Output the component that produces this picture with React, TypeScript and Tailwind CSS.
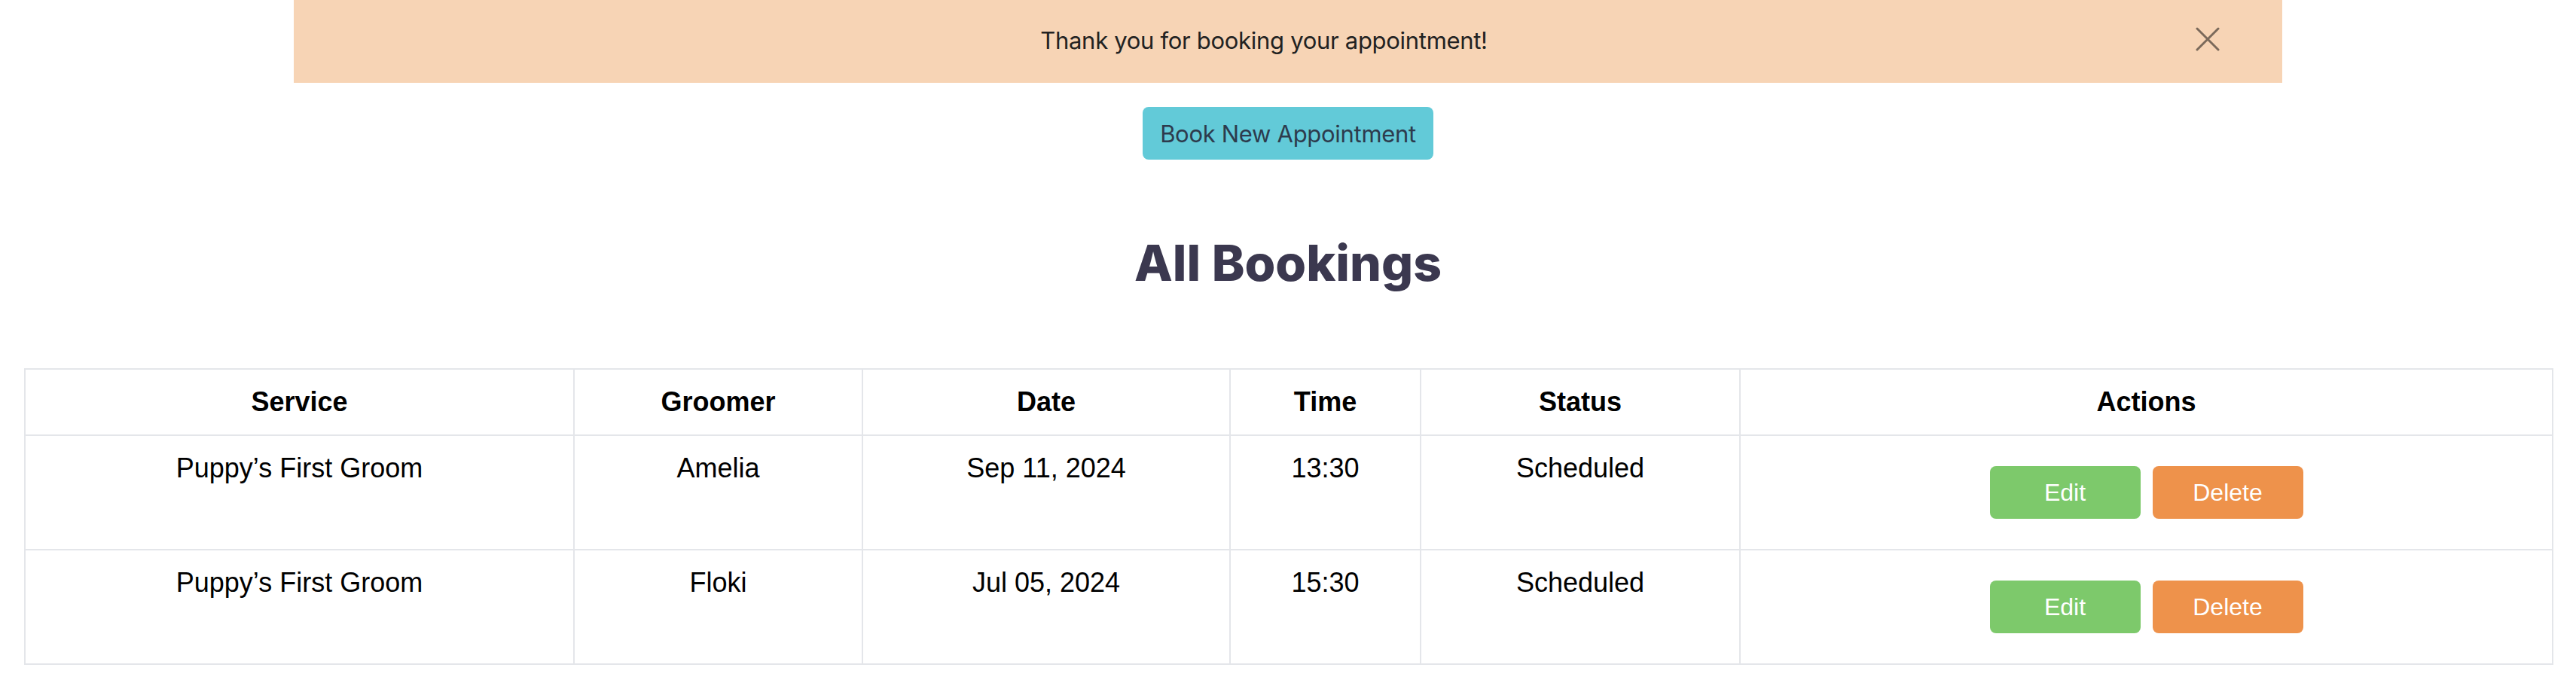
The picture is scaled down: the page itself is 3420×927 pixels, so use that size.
import { useState } from "react";

const bookings = [
  { service: "Puppy’s First Groom", groomer: "Amelia", date: "Sep 11, 2024", time: "13:30", status: "Scheduled" },
  { service: "Puppy’s First Groom", groomer: "Floki", date: "Jul 05, 2024", time: "15:30", status: "Scheduled" },
];

export default function App() {
  const [showBanner, setShowBanner] = useState(true);

  return (
    <div className="min-h-screen bg-white font-['Liberation_Sans',Arial,sans-serif]">
      {showBanner && (
        <div className="relative mx-auto flex h-[110px] w-[2640px] items-center bg-[#f7d4b5] pb-[2px] pr-[64px]">
          <p className="flex-1 text-center font-['Inter',sans-serif] text-[31px] tracking-[-0.3px] text-[#222222]">
            Thank you for booking your appointment!
          </p>
          <button
            className="absolute right-[83px] top-[36px] h-[32px] w-[32px]"
            onClick={() => setShowBanner(false)}
          >
            <svg viewBox="0 0 32 32" className="h-[32px] w-[32px]">
              <path d="M2 2 30 30M30 2 2 30" stroke="#7b6a5b" strokeWidth="3" strokeLinecap="round" fill="none" />
            </svg>
          </button>
        </div>
      )}

      <div className="mt-[32px] flex justify-center">
        <button className="h-[70px] rounded-[8px] bg-[#62cad8] px-[23px] pt-[2px] font-['Inter',sans-serif] text-[31px] tracking-[-0.3px] text-[#2d3b4d]">
          Book New Appointment
        </button>
      </div>

      <h1 className="mt-[104px] text-center font-['Inter',sans-serif] text-[66px] font-extrabold leading-none text-[#3b384f]">
        All Bookings
      </h1>

      <div className="mt-[107px] px-8">
        <table className="w-full table-fixed border-collapse border-2 border-[#e4e6ea] text-[36px] leading-[54px] text-black">
          <thead>
            <tr>
              <th className="w-[729px] border-2 border-[#e4e6ea] py-4 font-bold">Service</th>
              <th className="w-[383px] border-2 border-[#e4e6ea] py-4 font-bold">Groomer</th>
              <th className="w-[488px] border-2 border-[#e4e6ea] py-4 font-bold">Date</th>
              <th className="w-[253px] border-2 border-[#e4e6ea] py-4 font-bold">Time</th>
              <th className="w-[424px] border-2 border-[#e4e6ea] py-4 font-bold">Status</th>
              <th className="w-[1079px] border-2 border-[#e4e6ea] py-4 font-bold">Actions</th>
            </tr>
          </thead>
          <tbody>
            {bookings.map((b, i) => (
              <tr key={i}>
                <td className="border-2 border-[#e4e6ea] py-4 text-center align-top">{b.service}</td>
                <td className="border-2 border-[#e4e6ea] py-4 text-center align-top">{b.groomer}</td>
                <td className="border-2 border-[#e4e6ea] py-4 text-center align-top">{b.date}</td>
                <td className="border-2 border-[#e4e6ea] py-4 text-center align-top">{b.time}</td>
                <td className="border-2 border-[#e4e6ea] py-4 text-center align-top">{b.status}</td>
                <td className="border-2 border-[#e4e6ea] py-[40px]">
                  <div className="flex justify-center gap-4">
                    <button className="h-[70px] w-[200px] rounded-[8px] bg-[#7dc96b] text-[32px] text-white">Edit</button>
                    <button className="h-[70px] w-[200px] rounded-[8px] bg-[#ee924b] text-[32px] text-white">Delete</button>
                  </div>
                </td>
              </tr>
            ))}
          </tbody>
        </table>
      </div>
    </div>
  );
}
